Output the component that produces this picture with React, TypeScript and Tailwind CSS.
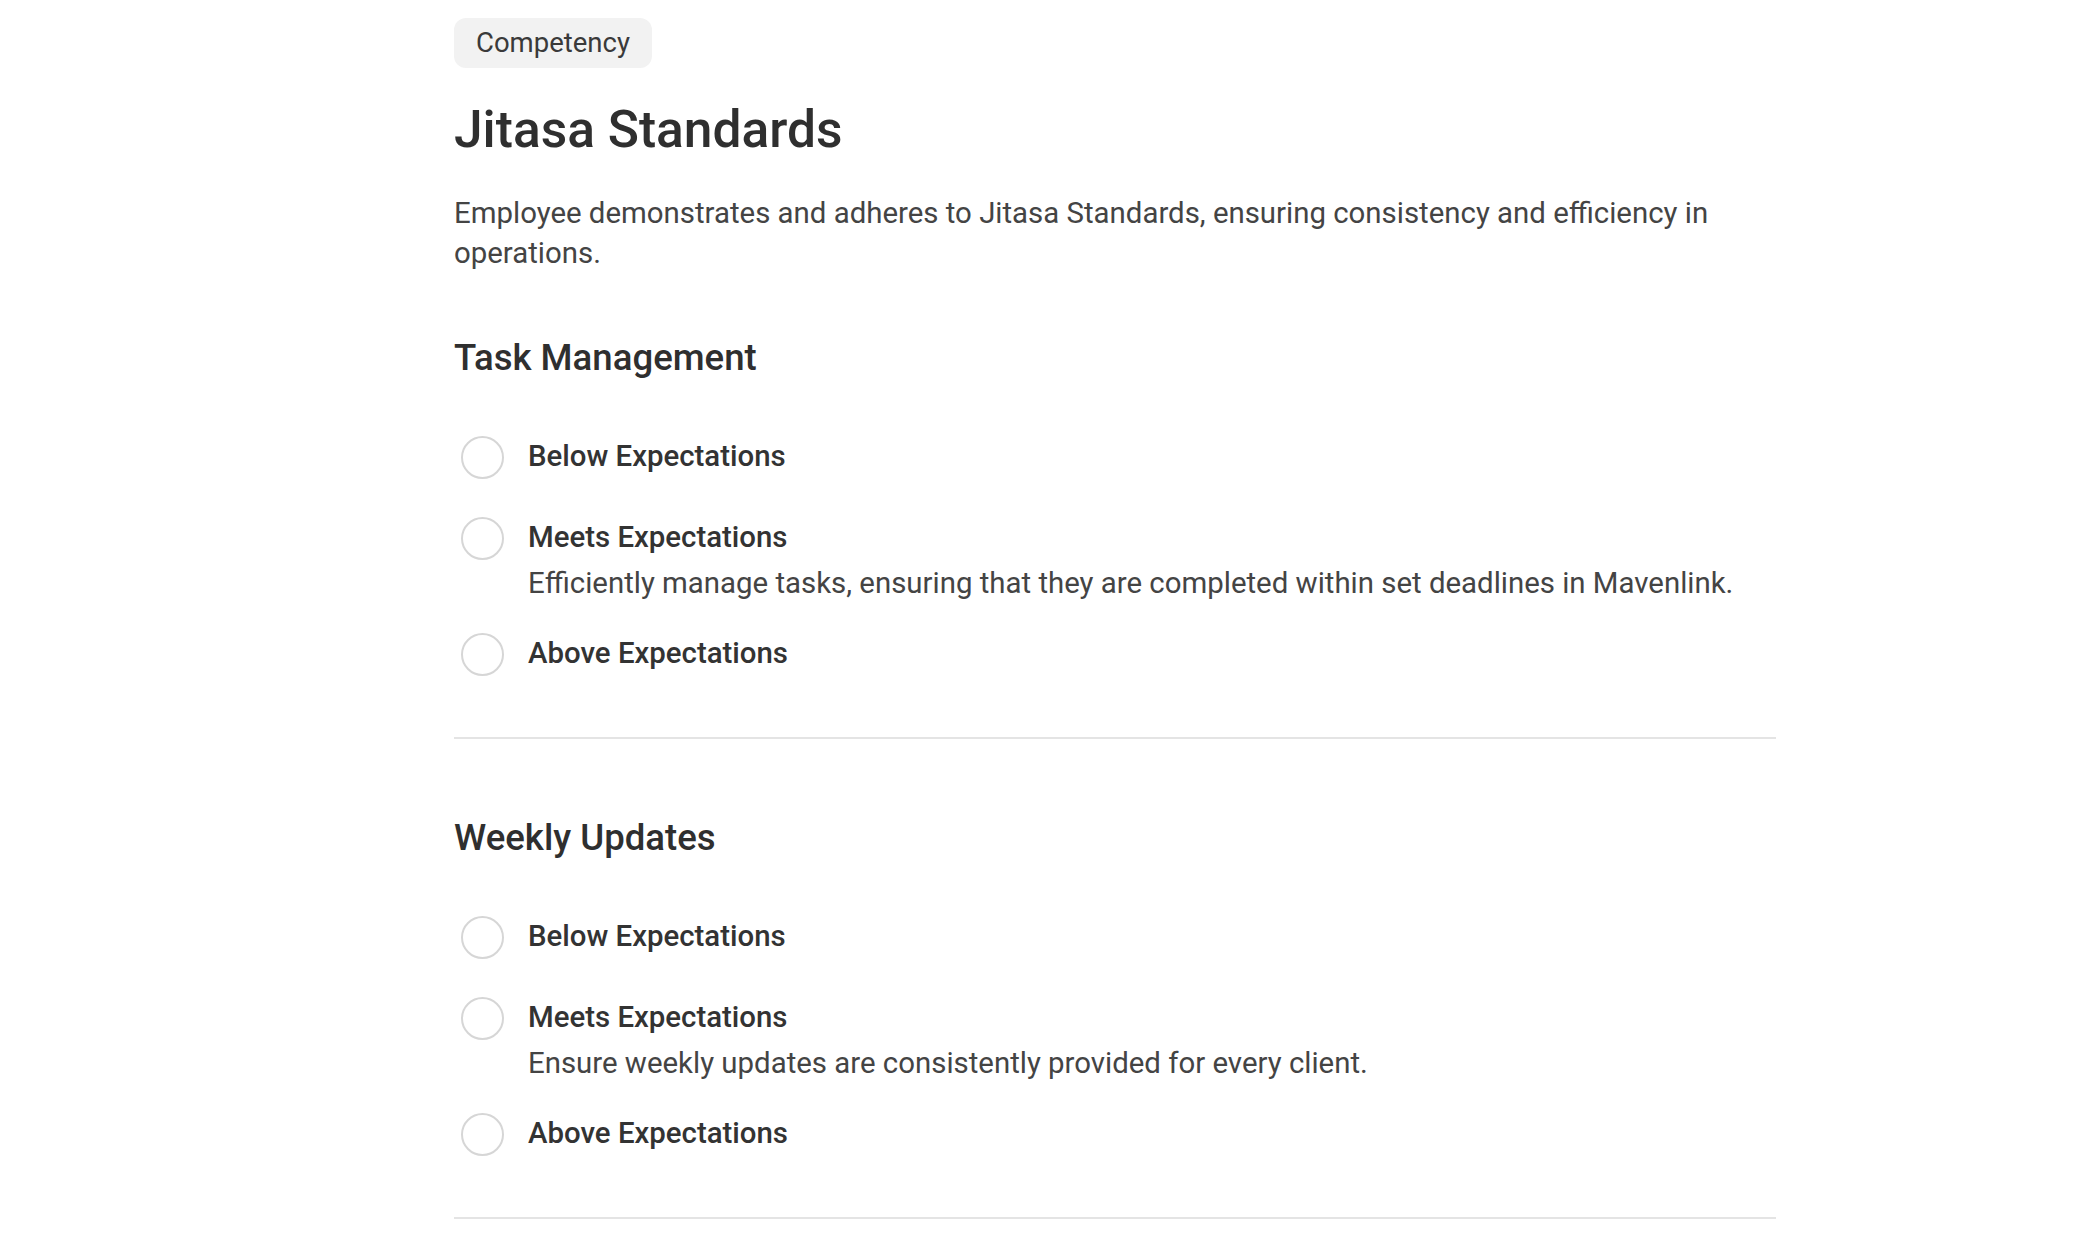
const sections = [
  {
    title: "Task Management",
    options: [
      { label: "Below Expectations" },
      {
        label: "Meets Expectations",
        description: "Efficiently manage tasks, ensuring that they are completed within set deadlines in Mavenlink.",
      },
      { label: "Above Expectations" },
    ],
  },
  {
    title: "Weekly Updates",
    options: [
      { label: "Below Expectations" },
      {
        label: "Meets Expectations",
        description: "Ensure weekly updates are consistently provided for every client.",
      },
      { label: "Above Expectations" },
    ],
  },
];

const App = () => {
  return (
    <div className="min-h-screen bg-white font-['Roboto',sans-serif] text-[#333]">
      <div className="ml-[454px] w-[1322px] pt-[18px]">
        <span className="inline-block rounded-[12px] bg-[#f2f2f2] px-[22px] py-[5px] text-[27.5px] leading-[40px] text-[#3a3a3a]">
          Competency
        </span>
        <h1 className="mt-[32px] text-[51.5px] leading-[60px] font-medium text-[#2f2f2f]">Jitasa Standards</h1>
        <p className="mt-[33px] text-[29.4px] leading-[40px] text-[#444]">
          Employee demonstrates and adheres to Jitasa Standards, ensuring consistency and efficiency in operations.
        </p>

        {sections.map((section, si) => (
          <section key={si} className={si === 0 ? "mt-[63px]" : "mt-[77px]"}>
            <h2 className="text-[36.6px] leading-[44px] font-medium text-[#2f2f2f]">{section.title}</h2>
            <div className="mt-[56px] flex flex-col">
              {section.options.map((opt, oi) => {
                const prevHasDesc = oi > 0 && !!section.options[oi - 1].description;
                return (
                  <label
                    key={oi}
                    className={
                      "flex items-start gap-[24px] " +
                      (oi === 0 ? "" : prevHasDesc ? "mt-[30px]" : "mt-[38px]")
                    }
                  >
                    <span className="ml-[7px] h-[43px] w-[43px] shrink-0 rounded-full border-2 border-[#d6d6d6] bg-white" />
                    <span className="flex flex-col">
                      <span className="text-[29.4px] leading-[40px] font-medium text-[#333]">{opt.label}</span>
                      {opt.description && (
                        <span className="mt-[6px] text-[29.4px] leading-[40px] text-[#444]">{opt.description}</span>
                      )}
                    </span>
                  </label>
                );
              })}
            </div>
            <div className="mt-[61px] h-[2px] bg-[#e4e4e4]" />
          </section>
        ))}
      </div>
    </div>
  );
};

export default App;
